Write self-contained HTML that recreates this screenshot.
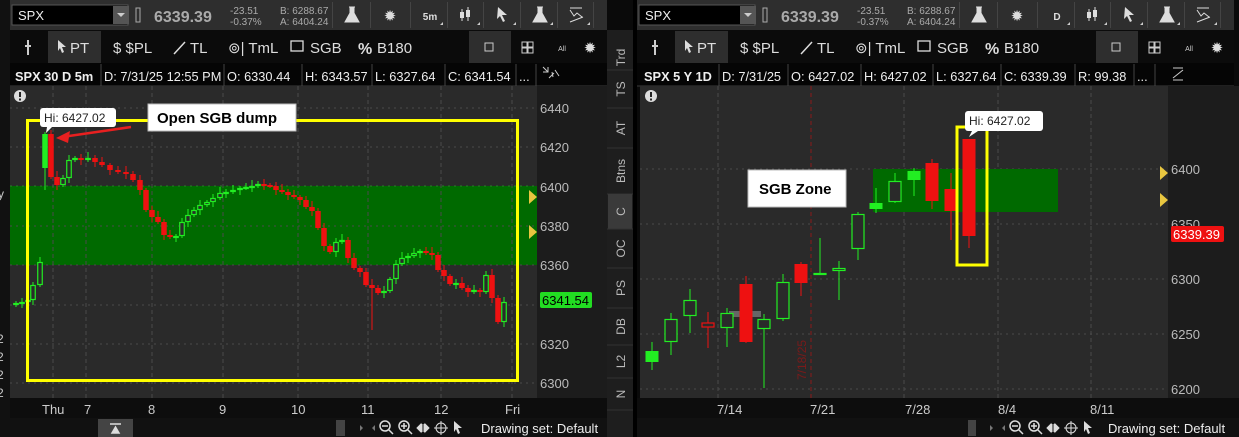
<!DOCTYPE html>
<html><head><meta charset="utf-8"><style>
html,body{margin:0;padding:0;background:#000;width:1239px;height:437px;overflow:hidden}
svg{display:block;font-family:"Liberation Sans",sans-serif}
</style></head><body>
<svg id="s" width="1239" height="437" viewBox="0 0 1239 437" xmlns="http://www.w3.org/2000/svg">
<rect width="1239" height="437" fill="#0a0a0a"/>
<rect x="0" y="0" width="10" height="437" fill="#111"/>
<text x="-2" y="198" fill="#ccc" font-size="12">y</text>
<text x="-3" y="343" fill="#ccc" font-size="12">2</text><text x="-3" y="361" fill="#ccc" font-size="12">2</text><text x="-3" y="379" fill="#ccc" font-size="12">2</text><text x="-3" y="397" fill="#ccc" font-size="12">2</text>

<g id="tb1"></g>

<rect x="10" y="86" width="527" height="312" fill="#2a2a2a"/>
<rect x="537" y="86" width="70" height="312" fill="#1c1c1c"/>
<rect x="10" y="186" width="527" height="79" fill="#006a00"/>
<g id="lgrid"></g>
<g id="lc"></g>
<rect x="27.5" y="120.5" width="490" height="260" fill="none" stroke="#ffff00" stroke-width="3"/>
<circle cx="20" cy="96" r="6" fill="#ddd"/><rect x="19" y="92" width="2" height="5" fill="#222"/><rect x="19" y="98.5" width="2" height="2" fill="#222"/>
<rect x="40" y="108" width="76" height="19" rx="3" fill="#fff"/>
<path d="M47 127 L46 133 L52 127Z" fill="#fff"/>
<text x="44" y="122" font-size="12" fill="#222">Hi: 6427.02</text>
<rect x="148" y="104" width="148" height="27" fill="#fff" stroke="#bbb"/>
<text x="157" y="123" font-size="15" font-weight="bold" fill="#000">Open SGB dump</text>
<path d="M131 127 L62 137" stroke="#e82020" stroke-width="2.5"/>
<path d="M56 138 L70 131 L68 143Z" fill="#e82020"/>
<g font-size="13" fill="#bbb">
<text x="540" y="113">6440</text><text x="540" y="152">6420</text><text x="540" y="192">6400</text><text x="540" y="231">6380</text><text x="540" y="270">6360</text><text x="540" y="349">6320</text><text x="540" y="388">6300</text>
</g>
<path d="M529 190 L537 197 L529 204Z M529 225 L537 232 L529 239Z" fill="#e8c640"/>
<rect x="540" y="292" width="52" height="16" rx="2" fill="#22dd22"/>
<text x="542" y="305" font-size="13" fill="#000">6341.54</text>
<rect x="10" y="398" width="597" height="20" fill="#0d0d0d"/>
<g font-size="13" fill="#ccc"><text x="42" y="414">Thu</text><text x="84" y="414">7</text><text x="148" y="414">8</text><text x="219" y="414">9</text><text x="291" y="414">10</text><text x="361" y="414">11</text><text x="434" y="414">12</text><text x="505" y="414">Fri</text></g>
<rect x="10" y="418" width="597" height="19" fill="#111"/>
<rect x="98" y="419" width="35" height="18" fill="#444"/>
<path d="M110 424 H121 M112 433 L115.5 427 L119 433Z" stroke="#ddd" stroke-width="1.5" fill="#ddd"/>
<rect x="336" y="420" width="9" height="16" fill="#444"/>

<rect x="607" y="30" width="26" height="407" fill="#1e1e1e"/>
<g id="tabs"></g>

<rect x="633" y="0" width="4" height="437" fill="#000"/>
<rect x="640" y="86" width="528" height="312" fill="#2a2a2a"/>
<rect x="1168" y="86" width="71" height="312" fill="#1c1c1c"/>
<g id="rgrid"></g>
<rect x="873" y="169" width="185" height="43" fill="#006a00"/>
<g id="rc"></g>
<rect x="957" y="127" width="30" height="138" fill="none" stroke="#ffff00" stroke-width="3"/>
<circle cx="651" cy="96" r="6" fill="#ddd"/><rect x="650" y="92" width="2" height="5" fill="#222"/><rect x="650" y="98.5" width="2" height="2" fill="#222"/>
<rect x="965" y="111" width="78" height="20" rx="3" fill="#fff"/>
<path d="M972 131 L969 137 L978 131Z" fill="#fff"/>
<text x="969" y="125" font-size="12" fill="#222">Hi: 6427.02</text>
<rect x="748" y="170" width="98" height="37" fill="#fff" stroke="#bbb"/>
<text x="759" y="194" font-size="15" font-weight="bold" fill="#000">SGB Zone</text>
<g font-size="13" fill="#bbb"><text x="1171" y="174">6400</text><text x="1171" y="229">6350</text><text x="1171" y="284">6300</text><text x="1171" y="339">6250</text><text x="1171" y="394">6200</text></g>
<path d="M1160 166 L1168 173 L1160 180Z M1160 193 L1168 200 L1160 207Z" fill="#e8c640"/>
<rect x="1171" y="226" width="53" height="16" rx="2" fill="#ee1111"/>
<text x="1173" y="239" font-size="13" fill="#fff">6339.39</text>
<text transform="translate(806,380) rotate(-90)" font-size="12" fill="#7a1a1a">7/18/25</text>
<rect x="637" y="398" width="602" height="20" fill="#0d0d0d"/>
<g font-size="13" fill="#ccc"><text x="717" y="414">7/14</text><text x="810" y="414">7/21</text><text x="905" y="414">7/28</text><text x="998" y="414">8/4</text><text x="1090" y="414">8/11</text></g>
<rect x="637" y="418" width="602" height="19" fill="#111"/>
<rect x="968" y="420" width="8" height="16" fill="#444"/>
<g id="bot"></g>
</svg>
<script>
const S=document.getElementById('s');const NS='http://www.w3.org/2000/svg';
function el(p,t,a,txt){const e=document.createElementNS(NS,t);for(const k in a)e.setAttribute(k,a[k]);if(txt!==undefined)e.textContent=txt;document.getElementById(p).appendChild(e);return e;}
function toolbar(o,tf,hdr){
 el('tb1','rect',{x:o,y:0,width:597,height:30,fill:'#2e2e2e'});
 el('tb1','rect',{x:o+2,y:5,width:116,height:20,fill:'#000',stroke:'#555'});
 el('tb1','rect',{x:o+103,y:6,width:16,height:18,fill:'#555'});
 el('tb1','path',{d:`M${o+107} 13 h8 l-4 4z`,fill:'#ccc'});
 el('tb1','text',{x:o+8,y:20,'font-size':13,fill:'#eee'},'SPX');
 el('tb1','rect',{x:o+126,y:8,width:4,height:14,fill:'none',stroke:'#aaa'});
 el('tb1','text',{x:o+144,y:22,'font-size':16,'font-weight':'bold',fill:'#aaa'},'6339.39');
 el('tb1','text',{x:o+220,y:14,'font-size':10,fill:'#aaa'},'-23.51');
 el('tb1','text',{x:o+220,y:25,'font-size':10,fill:'#aaa'},'-0.37%');
 el('tb1','text',{x:o+270,y:14,'font-size':10,fill:'#aaa'},'B: 6288.67');
 el('tb1','text',{x:o+270,y:25,'font-size':10,fill:'#aaa'},'A: 6404.24');
 const xs=[342,380,420,457,493,530,567,603];
 xs.forEach((x,i)=>{el('tb1','rect',{x:o+x-20,y:2,width:1,height:26,fill:'#444'});});
 const g=(x)=>o+x;
 [342,530].forEach(x=>el('tb1','path',{d:`M${g(x)-3} 7 h6 M${g(x)-2} 7 v6 l-5 9 h14 l-5 -9 v-6`,fill:'#ddd',stroke:'#ddd','stroke-width':1}));
 el('tb1','text',{x:g(380),y:21,'font-size':15,fill:'#ddd','text-anchor':'middle'},'✹');
 el('tb1','text',{x:g(420),y:20,'font-size':10,fill:'#ddd','text-anchor':'middle','font-weight':'bold'},tf);
 el('tb1','path',{d:`M${g(452)} 9v12 M${g(458)} 7v14`,stroke:'#ddd','stroke-width':1});
 el('tb1','rect',{x:g(450),y:12,width:4,height:6,fill:'#ddd'});el('tb1','rect',{x:g(456),y:10,width:4,height:7,fill:'#ddd'});
 el('tb1','path',{d:`M${g(488)} 7 l9 8 h-5 l3 6 -2 1 -3 -6 -3 3z`,fill:'#ddd'});
 el('tb1','path',{d:`M${g(560)} 8 h12 M${g(560)} 10 l4 6 3 -3 5 4 M${g(560)} 22 l13 -5`,stroke:'#ddd',fill:'none'});
 [420,457,493,530,567].forEach(x=>el('tb1','path',{d:`M${g(x)+10} 25 l3 -3 v3z`,fill:'#ccc'}));
 el('tb1','rect',{x:o,y:30,width:597,height:33,fill:'#0b0b0b'});
 el('tb1','rect',{x:o+38,y:31,width:53,height:32,fill:'#2e2e2e'});
 el('tb1','path',{d:`M${o+18} 40v10 M${o+15} 46h6 M${o+18} 50v5`,stroke:'#ccc','stroke-width':2});
 el('tb1','path',{d:`M${o+48} 40 l8 7 h-4 l2 5 -2 1 -2 -5 -2 3z`,fill:'#ddd'});
 el('tb1','text',{x:o+60,y:53,'font-size':15,fill:'#ddd'},'PT');
 el('tb1','text',{x:o+103,y:53,'font-size':15,fill:'#ddd'},'$ $PL');
 el('tb1','path',{d:`M${o+164} 54 l11 -12`,stroke:'#ddd','stroke-width':1.5});
 el('tb1','text',{x:o+180,y:53,'font-size':15,fill:'#ddd'},'TL');
 el('tb1','text',{x:o+218,y:53,'font-size':15,fill:'#ddd'},'⊚| TmL');
 el('tb1','rect',{x:o+281,y:41,width:12,height:10,fill:'none',stroke:'#ddd','stroke-width':1.3});
 el('tb1','text',{x:o+300,y:53,'font-size':15,fill:'#ddd'},'SGB');
 el('tb1','text',{x:o+348,y:54,'font-size':16,'font-weight':'bold',fill:'#ddd'},'%');
 el('tb1','text',{x:o+367,y:53,'font-size':15,fill:'#ddd'},'B180');
 el('tb1','rect',{x:o+459,y:31,width:42,height:32,fill:'#2e2e2e'});
 el('tb1','rect',{x:o+475,y:43,width:8,height:8,fill:'none',stroke:'#ccc'});
 [[o+512,42],[o+518,42],[o+512,48],[o+518,48]].forEach(p=>el('tb1','rect',{x:p[0],y:p[1],width:5,height:5,fill:'none',stroke:'#ccc'}));
 el('tb1','text',{x:o+552,y:51,'font-size':7,fill:'#ccc','text-anchor':'middle'},'All');
 el('tb1','text',{x:o+580,y:53,'font-size':15,fill:'#ddd','text-anchor':'middle'},'✹');
 el('tb1','rect',{x:o,y:63,width:597,height:23,fill:'#050505'});
 el('tb1','line',{x1:o,y1:86,x2:o+597,y2:86,stroke:'#3a3a3a'});
 hdr.forEach((h,i)=>{el('tb1','text',{x:h[0]+3,y:81,'font-size':12.8,fill:'#eee','font-weight':i==0?'bold':'normal'},h[1]); if(i>0) el('tb1','line',{x1:h[0],y1:64,x2:h[0],y2:86,stroke:'#444'});});
}
toolbar(10,'5m',[[12,'SPX 30 D 5m'],[101,'D: 7/31/25 12:55 PM'],[224,'O: 6330.44'],[302,'H: 6343.57'],[372,'L: 6327.64'],[445,'C: 6341.54'],[516,'...'],[536,'']]);
toolbar(637,'D',[[641,'SPX 5 Y 1D'],[719,'D: 7/31/25'],[788,'O: 6427.02'],[861,'H: 6427.02'],[933,'L: 6327.64'],[1001,'C: 6339.39'],[1075,'R: 99.38'],[1134,'...'],[1155,'']]);
el('tb1','path',{d:'M543 67 l5 5 M548 67v5h-5 M549 78 l5 -5 M553 77 l-1 -5 M555 70 l4 6',stroke:'#ccc',fill:'none'});
el('tb1','path',{d:'M1173 68 h10 M1173 78 l10 -8 M1173 80 h10',stroke:'#ccc',fill:'none'});
[['Trd',45,70],['TS',70,108],['AT',108,148],['Btns',148,194],['C',194,229],['OC',229,268],['PS',268,308],['DB',308,345],['L2',345,378],['N',378,410]].forEach(t=>{
 if(t[0]=='C')el('tabs','rect',{x:608,y:t[1],width:24,height:t[2]-t[1],fill:'#3a3a3a'});
 el('tabs','line',{x1:607,y1:t[2],x2:633,y2:t[2],stroke:'#333'});
 const c=(t[1]+t[2])/2;
 el('tabs','text',{transform:`translate(625,${c}) rotate(-90)`,'font-size':12,fill:'#bbb','text-anchor':'middle'},t[0]);
});
[108,147,226,265,305,344,383].forEach(y=>el('lgrid','line',{x1:10,y1:y,x2:537,y2:y,stroke:'#4a4a4a','stroke-dasharray':'2 4'}));
[186].forEach(y=>el('lgrid','line',{x1:10,y1:y,x2:537,y2:y,stroke:'#2a7a2a','stroke-dasharray':'2 4'}));
[53,86,152,223,298,368,441,512].forEach(x=>el('lgrid','line',{x1:x,y1:86,x2:x,y2:398,stroke:'#4a4a4a','stroke-dasharray':'4 3'}));
[169,224,279,334,389].forEach(y=>el('rgrid','line',{x1:640,y1:y,x2:1168,y2:y,stroke:'#4a4a4a','stroke-dasharray':'2 4'}));
[718,904,998,1091].forEach(x=>el('rgrid','line',{x1:x,y1:86,x2:x,y2:398,stroke:'#4a4a4a','stroke-dasharray':'4 3'}));
el('rgrid','line',{x1:811,y1:86,x2:811,y2:398,stroke:'#8a1a1a','stroke-dasharray':'4 3'});
el('rgrid','rect',{x:729,y:311,width:32,height:6,fill:'#666'});
function candle(g,x,w,o,c,hi,lo,filled){
 const up=c<o;const col=up?'#22ee22':'#ee1111';
 el(g,'line',{x1:x,y1:hi,x2:x,y2:lo,stroke:col,'stroke-width':1});
 const t=Math.min(o,c),h=Math.max(Math.abs(o-c),2);
 if(up&&!filled) el(g,'rect',{x:x-w/2+0.5,y:t+0.5,width:w-1,height:h-1,fill:'#2a2a2a',stroke:col,'stroke-width':1.2});
 else el(g,'rect',{x:x-w/2,y:t,width:w,height:h,fill:col});
}
[[652,362,351,342,370,1],[671,342,319,313,355],[690,316,300,289,333],[708,323,327,312,348,2],[727,328,313,308,347],[746,284,342,276,343],[764,329,319,314,388],[783,319,282,274,321],[801,264,283,262,296],[820,274,273,238,275],[839,271,268,261,300],[858,249,214,212,260],[876,209,203,188,213,1],[895,202,181,173,203],[914,180,171,168,196,1],[932,163,201,159,209],[951,189,211,173,240],[969,139,236,139,248]].forEach(c=>{
 if(c[5]==2){el('rc','line',{x1:c[0],y1:c[3],x2:c[0],y2:c[4],stroke:'#ee1111'});el('rc','rect',{x:c[0]-6,y:c[1],width:12,height:4,fill:'#2a2a2a',stroke:'#ee1111','stroke-width':1.2});return;}
 candle('rc',c[0],13,c[1],c[2],c[3],c[4],c[5]==1);
});
const kp=[[16,303],[22,302],[28,300],[33,285],[40,262],[45,134],[51,177],[57,185],[63,178],[69,160],[75,158],[81,160],[88,158],[95,162],[102,165],[110,170],[118,172],[126,174],[133,180],[140,190],[146,210],[152,217],[158,222],[164,235],[170,237],[176,236],[182,222],[188,215],[194,210],[200,205],[207,202],[213,198],[220,193],[226,192],[233,190],[240,188],[246,187],[252,186],[258,184],[264,185],[270,186],[276,190],[282,192],[288,195],[294,197],[300,200],[306,207],[312,211],[318,228],[324,246],[330,252],[336,242],[342,240],[348,258],[354,268],[360,272],[366,285],[372,288],[378,293],[384,291],[390,279],[396,264],[402,258],[408,256],[414,253],[420,251],[426,253],[432,255],[438,270],[444,276],[450,284],[456,283],[462,288],[468,292],[474,290],[480,292],[486,275],[492,298],[498,322],[504,302]];
let prev=305;
kp.forEach((k,i)=>{let o=prev,c=k[1];if(k[0]==45)o=168;
 let hi=Math.min(o,c)-2-(i*7%5),lo=Math.max(o,c)+2+(i*3%6);
 if(k[0]==45){hi=132;lo=190;}
 if(k[0]==372){lo=330;}
 candle('lc',k[0],5.5,o,c,hi,lo,k[0]==45);prev=c;});
function bot(x0,tx){
 const g='bot';
 el(g,'path',{d:`M${x0-8} 428 l-3 -3 v6z M${x0+1} 428 l3 -3 v6z`,fill:'#777'});
 el(g,'circle',{cx:x0+14,cy:426,r:5,fill:'none',stroke:'#ddd','stroke-width':1.5});el(g,'path',{d:`M${x0+11} 426h6 M${x0+18} 430l4 4`,stroke:'#ddd','stroke-width':1.5});
 el(g,'circle',{cx:x0+33,cy:426,r:5,fill:'none',stroke:'#ddd','stroke-width':1.5});el(g,'path',{d:`M${x0+30} 426h6 M${x0+33} 423v6 M${x0+37} 430l4 4`,stroke:'#ddd','stroke-width':1.5});
 el(g,'path',{d:`M${x0+46} 428 l4 -4 v8z M${x0+58} 428 l-4 -4 v8z M${x0+51} 424v8 M${x0+53} 424v8`,fill:'#ddd',stroke:'#ddd'});
 el(g,'circle',{cx:x0+70,cy:428,r:5,fill:'none',stroke:'#ddd'});el(g,'path',{d:`M${x0+63} 428h14 M${x0+70} 421v14`,stroke:'#ddd'});
 el(g,'path',{d:`M${x0+83} 421 l8 7 h-4 l2 5 -2 1 -2 -5 -2 3z`,fill:'#ddd'});
 el(g,'text',{x:tx,y:433,'font-size':13,fill:'#eee'},'Drawing set: Default');
}
bot(371,481);bot(1001,1108);
</script>
</body></html>
